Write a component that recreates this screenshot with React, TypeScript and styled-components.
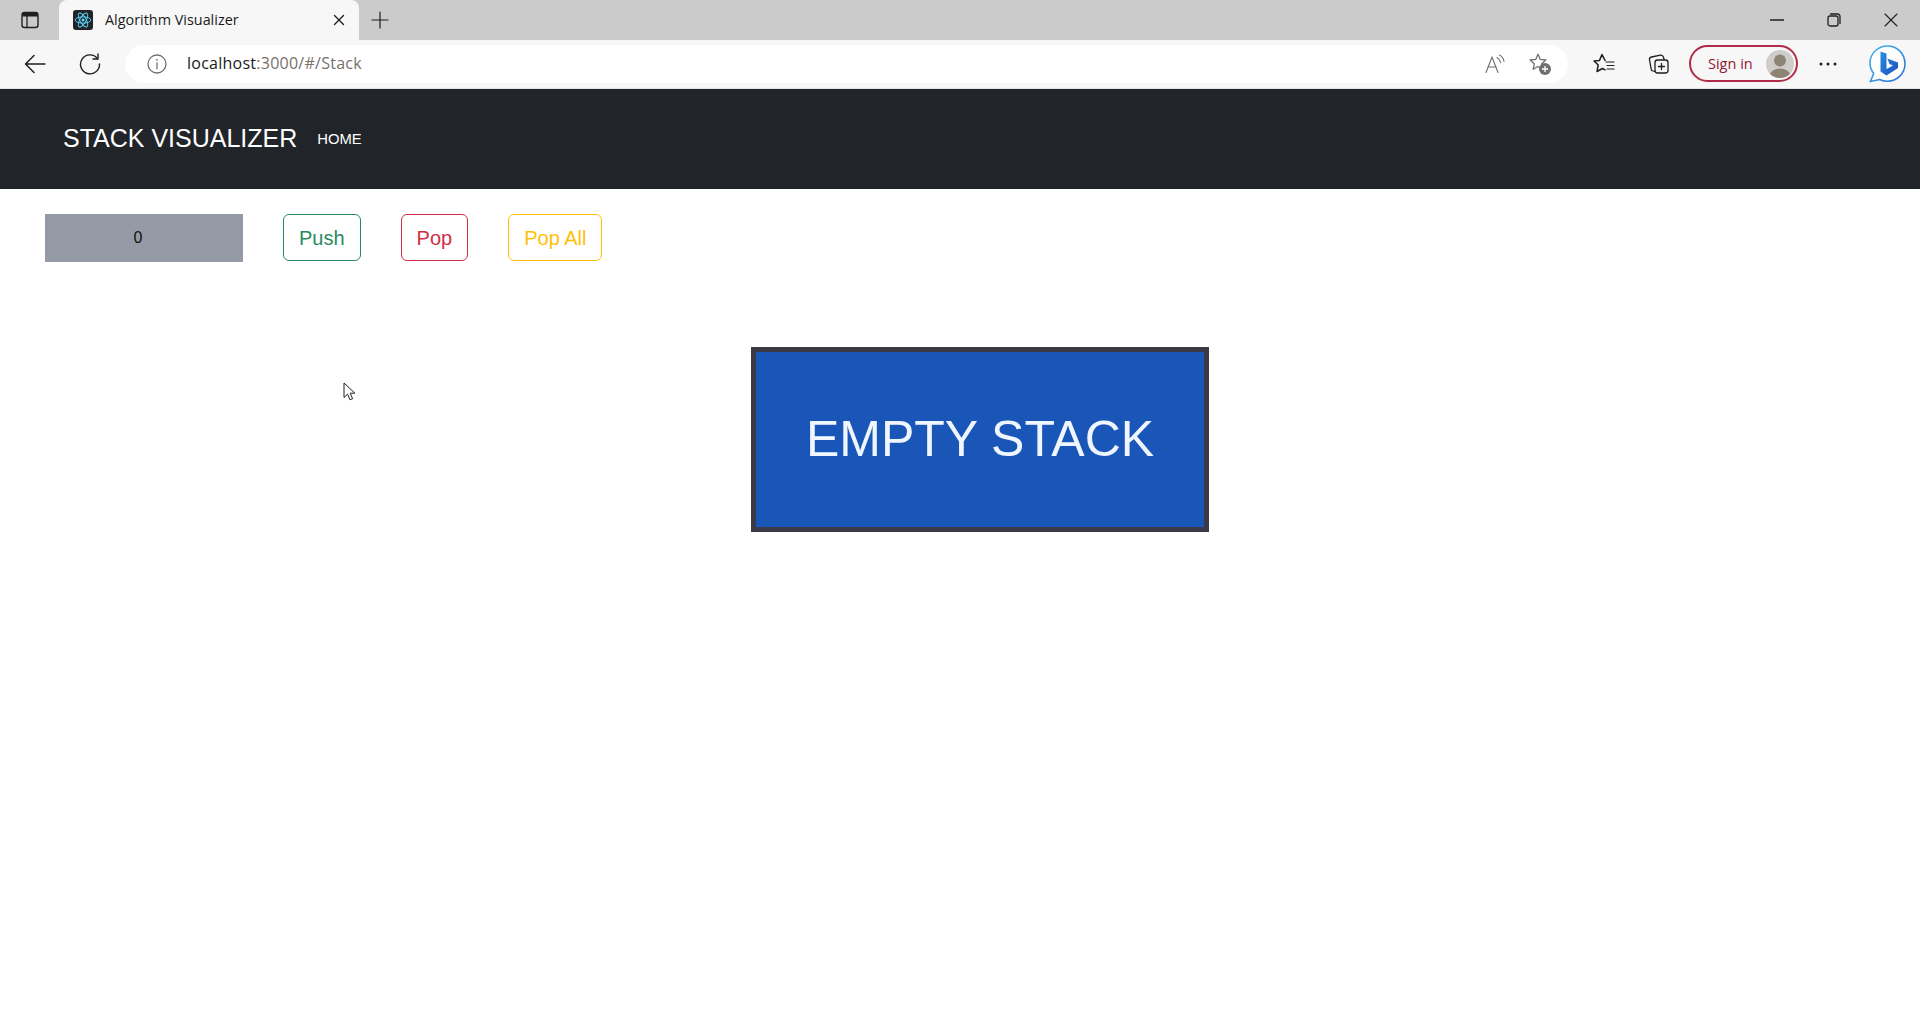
import React from 'react'
import styled, { createGlobalStyle } from 'styled-components'

const GlobalStyle = createGlobalStyle`
  html, body {
    margin: 0;
    padding: 0;
    height: 100%;
    background: #fff;
    overflow: hidden;
  }
  * { box-sizing: border-box; }
`

const Page = styled.div`
  position: relative;
  width: 1920px;
  height: 1020px;
  font-family: "Liberation Sans", Arial, sans-serif;
`

/* ── browser chrome ── */
const TabStrip = styled.div`
  display: flex;
  align-items: flex-end;
  height: 40px;
  background: #cbcbcb;
`

const StripSlot = styled.div<{ $w: number }>`
  display: flex;
  align-items: center;
  justify-content: center;
  flex: none;
  width: ${(p) => p.$w}px;
  height: 40px;
`

const Tab = styled.div`
  display: flex;
  align-items: center;
  flex: none;
  width: 300px;
  height: 40px;
  padding: 0 13px 0 14px;
  background: #f7f7f7;
  border-radius: 8px 8px 0 0;
  font-family: "Open Sans", sans-serif;
  font-size: 14.4px;
  color: #1a1a1a;
`

const TabIcon = styled.div`
  display: flex;
  align-items: center;
  justify-content: center;
  width: 20px;
  height: 20px;
  border-radius: 3px;
  background: #20232a;
  margin-right: 12px;
`

const TabTitle = styled.span`
  flex: 1;
  padding-bottom: 2px;
`

const Spacer = styled.div`
  flex: 1;
`

const Toolbar = styled.div`
  display: flex;
  align-items: center;
  height: 49px;
  padding: 0 10px 1px 12px;
  background: #f7f7f7;
  border-bottom: 1px solid #e2e2e2;
`

const ToolSlot = styled.div<{ $ml?: number }>`
  display: flex;
  align-items: center;
  justify-content: center;
  flex: none;
  width: 46px;
  height: 38px;
  margin-left: ${(p) => p.$ml ?? 0}px;
`

const AddressBar = styled.div`
  display: flex;
  align-items: center;
  flex: none;
  width: 1443px;
  height: 38px;
  margin-left: 12px;
  padding: 0 5px 0 21px;
  background: #fff;
  border-radius: 19px;
  font-family: "Open Sans", sans-serif;
  font-size: 16px;
`

const UrlHost = styled.span`
  margin-left: 19px;
  padding-bottom: 1px;
  color: #1a1a1a;
  letter-spacing: 0.25px;
`

const UrlRest = styled.span`
  flex: 1;
  padding-bottom: 1px;
  color: #77706a;
  letter-spacing: 0.25px;
`

const SignIn = styled.div`
  display: flex;
  align-items: center;
  justify-content: space-between;
  flex: none;
  width: 109px;
  height: 37px;
  margin-left: 7px;
  padding: 0 2px 0 17px;
  border: 2px solid #b02c48;
  border-radius: 19px;
  font-family: "Open Sans", sans-serif;
  font-size: 14.5px;
  color: #8e1a33;
`

const SignInLabel = styled.span`
  padding-bottom: 1px;
`

const Avatar = styled.div`
  width: 28px;
  height: 28px;
  border-radius: 50%;
  overflow: hidden;
  background: #cfcdca;
`

const Cursor = styled.svg`
  position: absolute;
  left: 343px;
  top: 382px;
`

/* ── app ── */
const Navbar = styled.nav`
  display: flex;
  align-items: center;
  height: 100px;
  padding: 0 0 1px 63px;
  background: #212529;
  color: #fff;
`

const Brand = styled.a`
  font-size: 25px;
  margin-right: 20px;
`

const NavLink = styled.a`
  font-size: 14.8px;
`

const Controls = styled.div`
  display: flex;
  align-items: flex-start;
  gap: 40px;
  padding: 25px 0 0 45px;
`

const ValueInput = styled.input`
  width: 198px;
  height: 48px;
  padding: 0 12px 0 0;
  border: none;
  outline: none;
  background: #959ba6;
  color: #111;
  font-family: "Liberation Sans", Arial, sans-serif;
  font-size: 16px;
  text-align: center;
`

const OutlineButton = styled.button<{ $color: string }>`
  height: 47px;
  padding: 1px 15px 0;
  background: #fff;
  border: 1px solid ${(p) => p.$color};
  border-radius: 6px;
  color: ${(p) => p.$color};
  font-family: "Liberation Sans", Arial, sans-serif;
  font-size: 20px;
`

const StackArea = styled.div`
  padding: 85px 0 0 751px;
`

const EmptyStack = styled.div`
  display: flex;
  align-items: center;
  justify-content: center;
  width: 458px;
  height: 185px;
  padding-bottom: 2px;
  background: #1a56b8;
  border: 5px solid #3a3b47;
  color: #eff6ff;
  font-size: 50px;
`

const iconStroke = {
  fill: 'none',
  stroke: '#1f1f1f',
  strokeWidth: 1.3,
  strokeLinecap: 'round',
  strokeLinejoin: 'round',
} as const

const grayStroke = { ...iconStroke, stroke: '#6f6f6f' }

const StarPath = 'M10 2.2 12.3 7.4 17.9 8 13.7 11.8 14.9 17.3 10 14.5 5.1 17.3 6.3 11.8 2.1 8 7.7 7.4Z'

function ReactLogo() {
  return (
    <svg width="18" height="18" viewBox="-12 -12 24 24" fill="none" stroke="#61dafb" strokeWidth="1.2">
      <circle r="2" fill="#61dafb" stroke="none" />
      <ellipse rx="10.5" ry="4.2" />
      <ellipse rx="10.5" ry="4.2" transform="rotate(60)" />
      <ellipse rx="10.5" ry="4.2" transform="rotate(120)" />
    </svg>
  )
}

function BingIcon() {
  return (
    <svg width="40" height="40" viewBox="0 0 40 40">
      <defs>
        <linearGradient id="bingB" x1="0" y1="0" x2="1" y2="1">
          <stop offset="0" stopColor="#2b8fe0" />
          <stop offset="1" stopColor="#1b4fc0" />
        </linearGradient>
        <linearGradient id="bingRing" x1="0" y1="0" x2="1" y2="1">
          <stop offset="0" stopColor="#45b4ee" />
          <stop offset="1" stopColor="#2a6fd8" />
        </linearGradient>
      </defs>
      <path
        d="M20.5 2C10.8 2 3 9.6 3 19c0 4 1.4 7.600 3.700 10.500L3.500 37.500 12.500 35.500C15 36.700 17.700 37.300 20.500 37.300 30 37.300 38 29.500 38 19.700 38 9.800 30.200 2 20.500 2Z"
        fill="#fff"
        stroke="url(#bingRing)"
        strokeWidth="1.6"
      />
      <path d="M13.500 7.500 19.500 9.500V25L26 21.500 22.500 20 20.300 14.600 31 18.500V24L19.500 31.500 13.500 27.500Z" fill="url(#bingB)" />
    </svg>
  )
}

export default function App() {
  return (
    <Page>
      <GlobalStyle />
      <TabStrip>
        <StripSlot $w={59}>
          <svg width="20" height="20" viewBox="0 0 20 20">
            <rect x="2" y="2.500" width="16" height="15" rx="2.500" {...iconStroke} strokeWidth={1.4} />
            <path d="M2.500 3h15v3.500h-15z" fill="#1f1f1f" />
            <path d="M7 6.500v10.500" {...iconStroke} />
          </svg>
        </StripSlot>
        <Tab>
          <TabIcon>
            <ReactLogo />
          </TabIcon>
          <TabTitle>Algorithm Visualizer</TabTitle>
          <svg width="14" height="14" viewBox="0 0 14 14">
            <path d="M2.500 2.500l9 9M11.500 2.500l-9 9" {...iconStroke} strokeWidth={1.4} />
          </svg>
        </Tab>
        <StripSlot $w={42}>
          <svg width="18" height="18" viewBox="0 0 18 18">
            <path d="M9 1v16M1 9h16" {...iconStroke} strokeWidth={1.2} />
          </svg>
        </StripSlot>
        <Spacer />
        <StripSlot $w={57}>
          <svg width="14" height="14" viewBox="0 0 14 14">
            <path d="M0.500 7h13" {...iconStroke} />
          </svg>
        </StripSlot>
        <StripSlot $w={57}>
          <svg width="14" height="14" viewBox="0 0 14 14">
            <rect x="1" y="3" width="10" height="10" rx="2" {...iconStroke} />
            <path d="M3.500 1h7a2.500 2.500 0 0 1 2.500 2.500v7" {...iconStroke} />
          </svg>
        </StripSlot>
        <StripSlot $w={58}>
          <svg width="14" height="14" viewBox="0 0 14 14">
            <path d="M1 1l12 12M13 1L1 13" {...iconStroke} strokeWidth={1.1} />
          </svg>
        </StripSlot>
      </TabStrip>
      <Toolbar>
        <ToolSlot>
          <svg width="22" height="22" viewBox="0 0 22 22">
            <path d="M21 11H1.500M10 2.500L1.500 11l8.500 8.500" {...iconStroke} strokeWidth={1.5} />
          </svg>
        </ToolSlot>
        <ToolSlot $ml={9}>
          <svg width="22" height="22" viewBox="0 0 22 22">
            <path d="M18.500 5.500A9.500 9.500 0 1 0 20.500 11" {...iconStroke} strokeWidth={1.4} />
            <path d="M19 1v5h-5" {...iconStroke} strokeWidth={1.4} />
          </svg>
        </ToolSlot>
        <AddressBar>
          <svg width="22" height="22" viewBox="0 0 22 22">
            <circle cx="11" cy="11" r="9" {...grayStroke} />
            <path d="M11 9.800v6" {...grayStroke} />
            <circle cx="11" cy="6.800" r="0.900" fill="#6f6f6f" />
          </svg>
          <UrlHost>localhost</UrlHost>
          <UrlRest>:3000/#/Stack</UrlRest>
          <ToolSlot>
            <svg width="22" height="22" viewBox="0 0 22 22">
              <path d="M2 19.500L8 4l6 15.500M4.200 14h7.600" {...grayStroke} strokeWidth={1.1} />
              <path d="M13 4.500c2 1 3 2.500 3.500 5M15.500 2c2.500 1.200 4 3.500 4.500 6.500" {...grayStroke} strokeWidth={1.1} />
            </svg>
          </ToolSlot>
          <ToolSlot $ml={-1}>
            <svg width="24" height="24" viewBox="0 0 24 24">
              <path d={StarPath} {...grayStroke} />
              <circle cx="17" cy="17" r="6" fill="#6f6f6f" />
              <path d="M17 14v6M14 17h6" stroke="#fff" strokeWidth="1.3" />
            </svg>
          </ToolSlot>
        </AddressBar>
        <ToolSlot $ml={13}>
          <svg width="22" height="22" viewBox="0 0 22 22">
            <path d="M12 7.400 9 1.500 6.500 7.400 1 8 5.200 12 4 18.500 9.500 15.500 12 16.800" {...iconStroke} strokeWidth={1.5} />
            <path d="M13 9h8M14 12.500h7M14 16h7" {...iconStroke} strokeWidth={1.2} />
          </svg>
        </ToolSlot>
        <ToolSlot $ml={9}>
          <svg width="22" height="22" viewBox="0 0 22 22">
            <rect x="7" y="7" width="13" height="13" rx="2.500" {...iconStroke} />
            <path d="M13.500 10.500v6M10.500 13.500h6" {...iconStroke} />
            <path d="M7 18.500L3.500 17.500 1.500 7c-.3-1.500.5-2.700 2-3l9-1.800c1.500-.3 2.500.5 3 2l.5 2.300" {...iconStroke} />
          </svg>
        </ToolSlot>
        <SignIn>
          <SignInLabel>Sign in</SignInLabel>
          <Avatar>
            <svg width="28" height="28" viewBox="0 0 28 28">
              <circle cx="14" cy="10.500" r="6" fill="#8d8475" />
              <ellipse cx="14" cy="25" rx="10" ry="6.500" fill="#8d8475" />
            </svg>
          </Avatar>
        </SignIn>
        <ToolSlot $ml={7}>
          <svg width="18" height="4" viewBox="0 0 18 4">
            <circle cx="2" cy="2" r="1.500" fill="#1f1f1f" />
            <circle cx="9" cy="2" r="1.500" fill="#1f1f1f" />
            <circle cx="16" cy="2" r="1.500" fill="#1f1f1f" />
          </svg>
        </ToolSlot>
        <ToolSlot $ml={13}>
          <BingIcon />
        </ToolSlot>
      </Toolbar>
      <Navbar>
        <Brand>STACK VISUALIZER</Brand>
        <NavLink>HOME</NavLink>
      </Navbar>
      <Controls>
        <ValueInput readOnly value="0" />
        <OutlineButton $color="#2a8a5e">Push</OutlineButton>
        <OutlineButton $color="#cf2e48">Pop</OutlineButton>
        <OutlineButton $color="#ffc107">Pop All</OutlineButton>
      </Controls>
      <StackArea>
        <EmptyStack>EMPTY STACK</EmptyStack>
      </StackArea>
      <Cursor width="14" height="20" viewBox="0 0 14 20">
        <path d="M1 1v14.500l3.600-3.300 2.400 5.600 2.600-1.100-2.400-5.500h4.700Z" fill="#fff" stroke="#222" strokeWidth="1" />
      </Cursor>
    </Page>
  )
}
